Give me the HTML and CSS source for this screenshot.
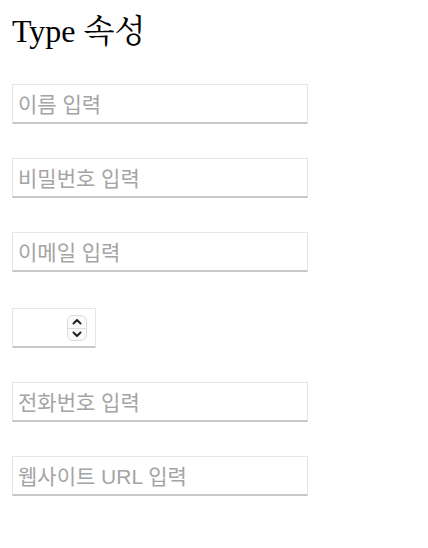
FILE: index.html
```html
<!DOCTYPE html>
<html lang="ko">
<head>
<meta charset="utf-8">
<link rel="stylesheet" href="styles.css">
</head>
<body>
<h1 class="title">Type 속성</h1>
<form class="form">
  <input class="field" type="text" placeholder="이름 입력">
  <input class="field" type="password" placeholder="비밀번호 입력">
  <input class="field" type="email" placeholder="이메일 입력">
  <span class="number-wrap">
    <input class="field field-number" type="number">
    <span class="spinner" aria-hidden="true">
      <span class="spin-btn">
        <svg width="10" height="7" viewBox="0 0 10 7"><path d="M1.5 5.5 L5 2 L8.5 5.5" fill="none" stroke="#222" stroke-width="2" stroke-linecap="round" stroke-linejoin="round"/></svg>
      </span>
      <span class="spin-btn spin-down">
        <svg width="10" height="7" viewBox="0 0 10 7"><path d="M1.5 1.5 L5 5 L8.5 1.5" fill="none" stroke="#222" stroke-width="2" stroke-linecap="round" stroke-linejoin="round"/></svg>
      </span>
    </span>
  </span>
  <input class="field" type="tel" placeholder="전화번호 입력">
  <input class="field" type="url" placeholder="웹사이트 URL 입력">
</form>
</body>
</html>
```
FILE: styles.css
```css
html, body {
  margin: 0;
  background: #fff;
}
body {
  padding: 12px;
}
.title {
  margin: 1px 0 0;
  font-family: "Liberation Serif", "Noto Serif CJK KR", "Noto Sans CJK KR", serif;
  font-size: 32px;
  font-weight: normal;
  line-height: 36px;
  color: #000;
}
.form {
  display: flex;
  flex-direction: column;
  align-items: flex-start;
  gap: 34px;
  margin-top: 35px;
}
.field {
  box-sizing: border-box;
  width: 296px;
  height: 40px;
  margin: 0;
  padding: 2px 5px 0;
  border: 1px solid #e6e6e6;
  border-bottom: 2px solid #c8c8c8;
  border-radius: 0;
  background: #fff;
  font-family: "Liberation Sans", "Noto Sans CJK KR", sans-serif;
  font-size: 21px;
  color: #333;
  outline: none;
}
.field::placeholder {
  color: #a4a4a4;
}
.number-wrap {
  position: relative;
  display: inline-flex;
  margin-top: 2px;
}
.field-number {
  width: 84px;
  -moz-appearance: textfield;
}
.field-number::-webkit-inner-spin-button,
.field-number::-webkit-outer-spin-button {
  -webkit-appearance: none;
  margin: 0;
}
.spinner {
  position: absolute;
  left: 55px;
  top: 7px;
  width: 20px;
  height: 26px;
  box-sizing: border-box;
  border: 1px solid #dcdcdc;
  border-radius: 6px;
  background: #fafafa;
  display: flex;
  flex-direction: column;
  overflow: hidden;
}
.spin-btn {
  flex: 1;
  display: flex;
  align-items: center;
  justify-content: center;
}
.spin-down {
  border-top: 1px solid #dcdcdc;
}
```
